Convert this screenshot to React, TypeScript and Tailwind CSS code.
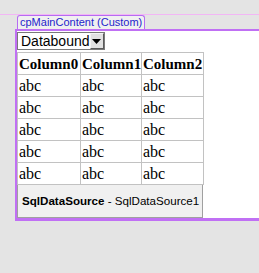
import React from 'react';

const rows = [0, 1, 2, 3, 4];
const cols = [
  { name: 'Column0', w: 'w-[63px]' },
  { name: 'Column1', w: 'w-[61px]' },
  { name: 'Column2', w: 'w-[62px]' },
];

export default function App() {
  return (
    <div className="w-[259px] h-[273px] bg-[#e4e4e4] overflow-hidden">
      <div className="h-[14px]" />
      <div className="h-px bg-[#f2b6f5]" />
      <div className="pl-[17px] flex">
        <div className="h-[14px] px-[2px] border border-b-0 border-[#b56cf2] rounded-t-[3px] bg-[#f0f0f0] text-[11px] leading-[13px] text-[#2424cc] font-['Liberation_Sans',sans-serif]">
          cpMainContent (Custom)
        </div>
      </div>
      <div className="ml-[15px] border-l-2 border-t-2 border-b-[3px] border-[#c070f4] bg-white">
        <div className="pt-px">
          <div className="flex items-center w-[88px] h-[18px] border border-[#7a7a7a] bg-white">
            <span className="flex-1 pl-[3px] text-[14px] leading-[16px] text-black font-['Liberation_Sans',sans-serif]">Databound</span>
            <span className="w-[17px] h-[16px] bg-[#e1e1e1] border border-t-[#f4f4f4] border-l-[#f4f4f4] border-r-[#5a5a5a] border-b-[#5a5a5a] flex items-center justify-center">
              <svg width="9" height="5" viewBox="0 0 9 5"><path d="M0 0h9L4.5 5z" fill="#000" /></svg>
            </span>
          </div>
        </div>
        <table className="mt-[2px] border-collapse table-fixed w-[186px] font-['Liberation_Serif',serif] text-[16px] text-black">
          <thead>
            <tr className="h-[22px]">
              {cols.map(c => (
                <th key={c.name} className={`${c.w} border border-[#c2c2c2] px-px text-left font-bold text-[15px] leading-[18px] whitespace-nowrap`}>{c.name}</th>
              ))}
            </tr>
          </thead>
          <tbody>
            {rows.map(r => (
              <tr key={r} className="h-[22px]">
                {cols.map(c => (
                  <td key={c.name} className="border border-[#c2c2c2] px-px leading-[18px]">abc</td>
                ))}
              </tr>
            ))}
          </tbody>
        </table>
        <div className="w-[186px] h-[33px] bg-[#f0f0f0] border border-t-0 border-[#a0a0a0] flex items-center pl-[4px] text-[11.6px] text-black font-['Liberation_Sans',sans-serif] whitespace-nowrap">
          <span className="font-bold">SqlDataSource</span>
          <span>&nbsp;- SqlDataSource1</span>
        </div>
      </div>
    </div>
  );
}
